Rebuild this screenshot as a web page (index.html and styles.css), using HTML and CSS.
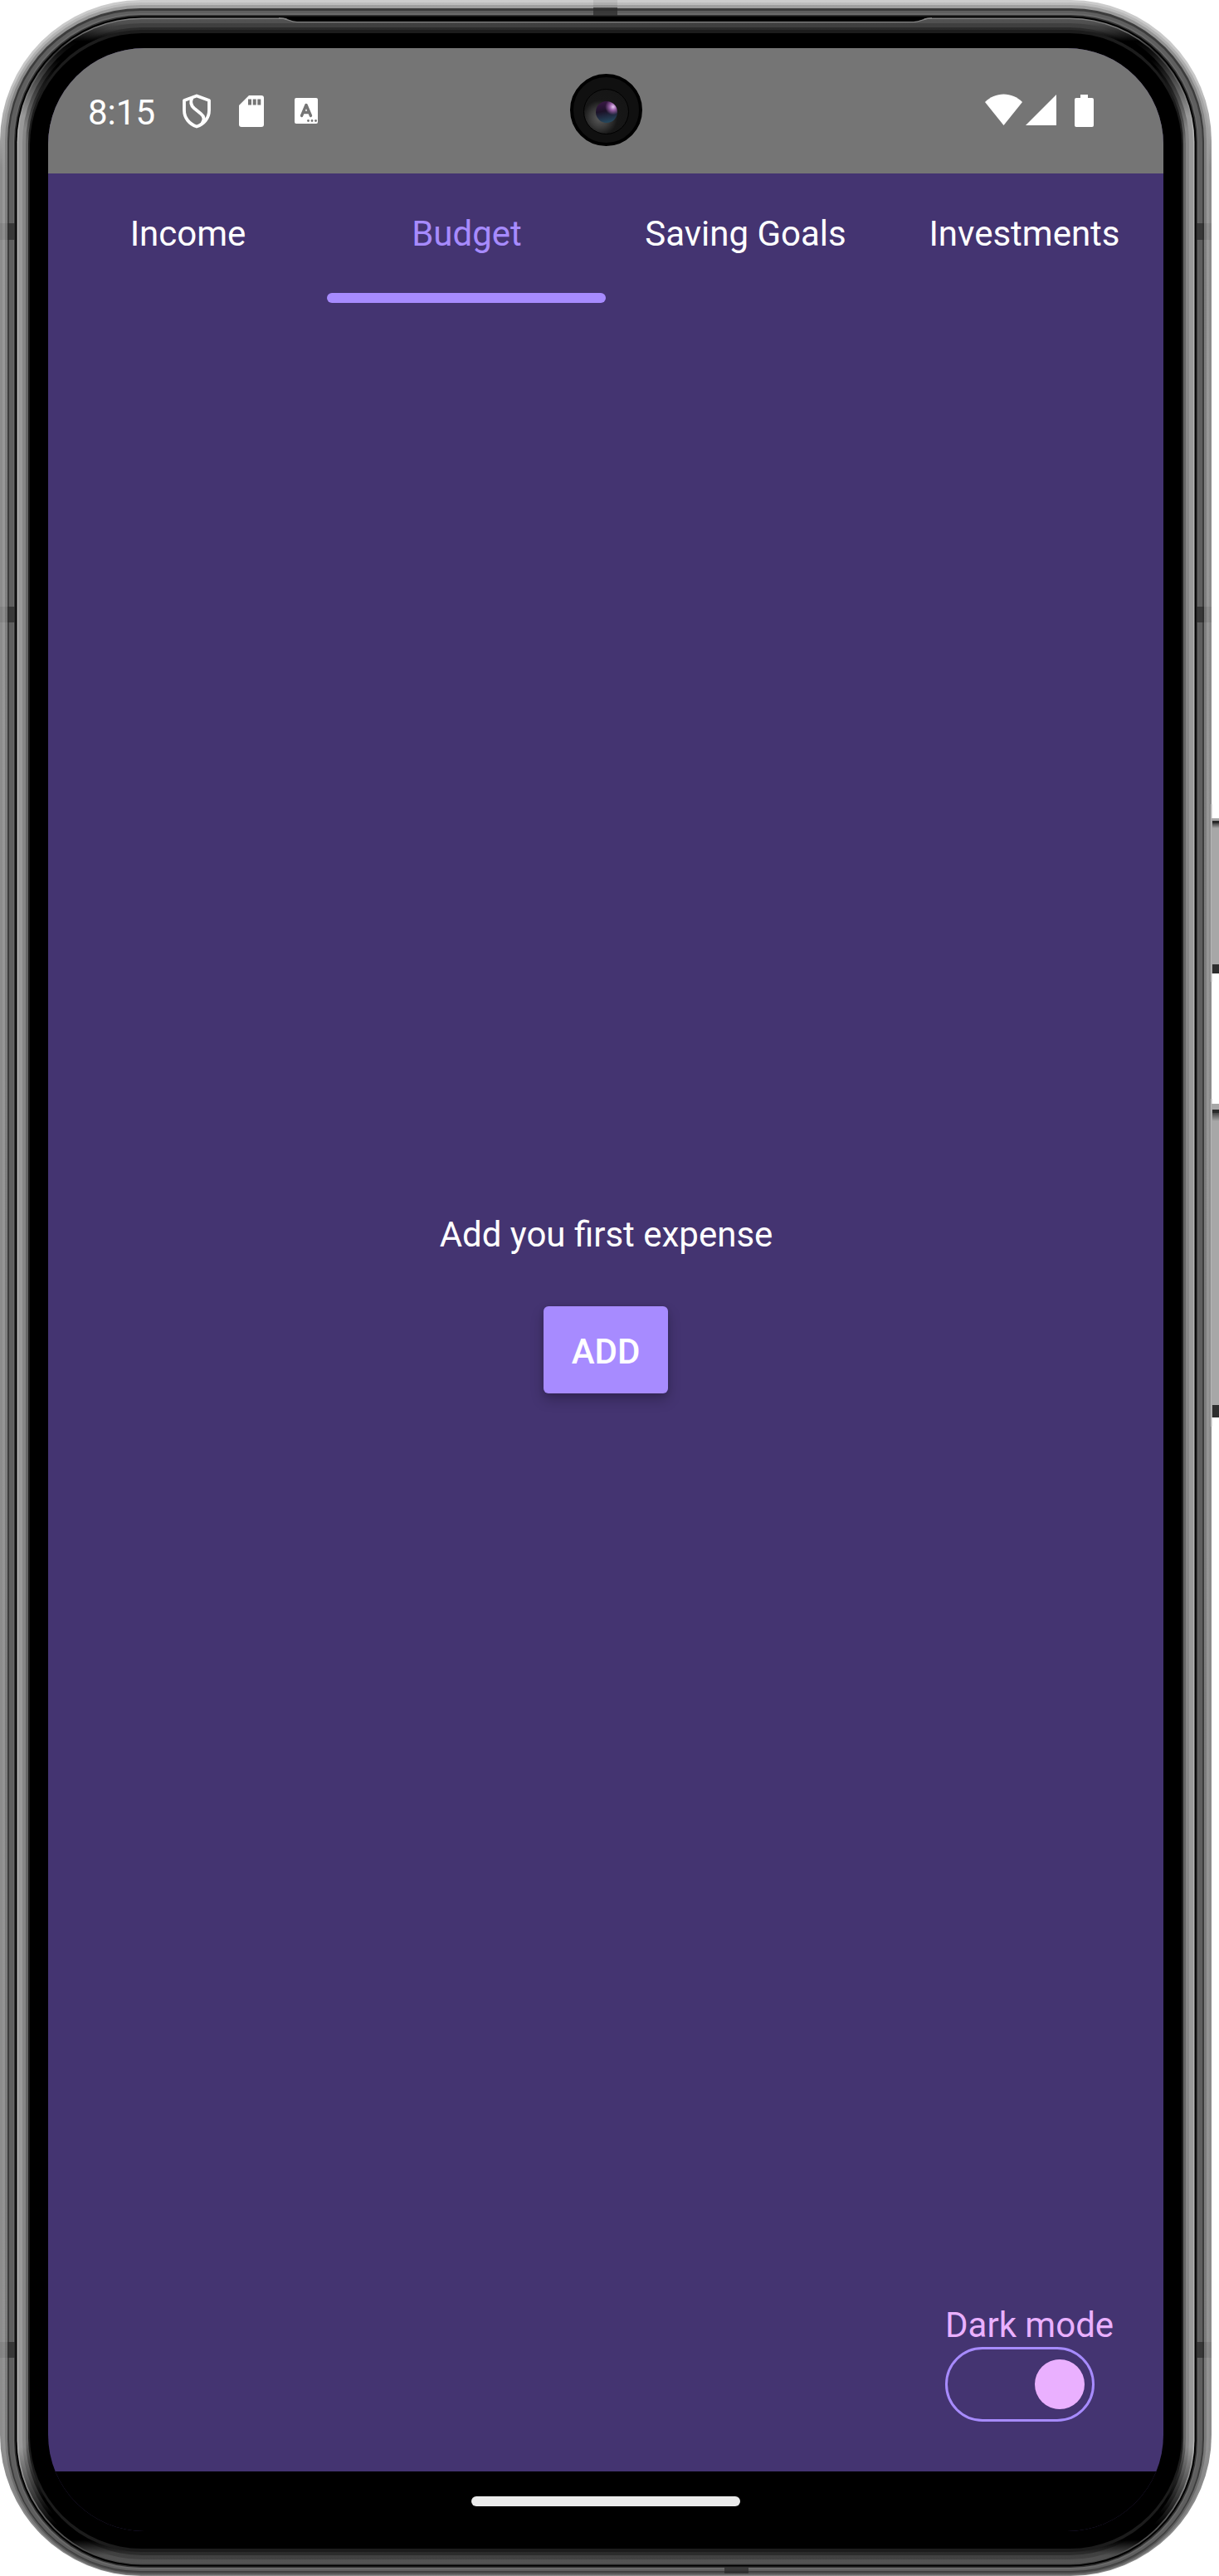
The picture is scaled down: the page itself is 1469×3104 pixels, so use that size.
FILE: index.html
```html
<!DOCTYPE html>
<html lang="en">
<head>
<meta charset="utf-8">
<title>Budget</title>
<link rel="stylesheet" href="styles.css">
</head>
<body>
<div class="phone">
  <svg class="bezel" width="1469" height="3104" viewBox="0 0 1469 3104" aria-hidden="true">
    <defs>
      <linearGradient id="rim0" gradientUnits="userSpaceOnUse" x1="0" y1="0" x2="0" y2="3104"><stop offset="0" stop-color="#ccc"/><stop offset=".03" stop-color="#c8c8c8"/><stop offset=".065" stop-color="#8c8c8c"/><stop offset=".95" stop-color="#8c8c8c"/><stop offset="1" stop-color="#8a8a8a"/></linearGradient>
      <linearGradient id="rim1" gradientUnits="userSpaceOnUse" x1="0" y1="0" x2="0" y2="3104"><stop offset="0" stop-color="#bdbdbd"/><stop offset=".03" stop-color="#aaa"/><stop offset=".065" stop-color="#989898"/><stop offset=".95" stop-color="#929292"/><stop offset="1" stop-color="#666"/></linearGradient>
      <linearGradient id="rim2" gradientUnits="userSpaceOnUse" x1="0" y1="0" x2="0" y2="3104"><stop offset="0" stop-color="#a0a0a0"/><stop offset=".03" stop-color="#888"/><stop offset=".065" stop-color="#808080"/><stop offset=".95" stop-color="#7c7c7c"/><stop offset="1" stop-color="#484848"/></linearGradient>
      <linearGradient id="line" gradientUnits="userSpaceOnUse" x1="0" y1="0" x2="0" y2="3104"><stop offset="0" stop-color="#8a8a8a"/><stop offset=".012" stop-color="#777"/><stop offset=".02" stop-color="#333"/><stop offset=".05" stop-color="#b4b4b4"/><stop offset=".95" stop-color="#b4b4b4"/><stop offset=".98" stop-color="#555"/><stop offset="1" stop-color="#444"/></linearGradient>
      <linearGradient id="glassA" gradientUnits="userSpaceOnUse" x1="0" y1="0" x2="0" y2="3104"><stop offset="0" stop-color="#585858"/><stop offset=".009" stop-color="#505050"/><stop offset=".016" stop-color="#000"/><stop offset=".021" stop-color="#111"/><stop offset=".045" stop-color="#999"/><stop offset=".95" stop-color="#999"/><stop offset=".98" stop-color="#000"/><stop offset=".986" stop-color="#000"/><stop offset=".992" stop-color="#505050"/><stop offset="1" stop-color="#585858"/></linearGradient>
      <linearGradient id="glassB" gradientUnits="userSpaceOnUse" x1="0" y1="0" x2="0" y2="3104"><stop offset="0" stop-color="#484848"/><stop offset=".011" stop-color="#3e3e3e"/><stop offset=".016" stop-color="#000"/><stop offset=".023" stop-color="#000"/><stop offset=".05" stop-color="#868686"/><stop offset=".95" stop-color="#868686"/><stop offset=".976" stop-color="#000"/><stop offset=".986" stop-color="#000"/><stop offset=".991" stop-color="#404040"/><stop offset="1" stop-color="#484848"/></linearGradient>
      <linearGradient id="glassC" gradientUnits="userSpaceOnUse" x1="0" y1="0" x2="0" y2="3104"><stop offset="0" stop-color="#333"/><stop offset=".012" stop-color="#2a2a2a"/><stop offset=".016" stop-color="#000"/><stop offset=".026" stop-color="#000"/><stop offset=".055" stop-color="#666"/><stop offset=".948" stop-color="#666"/><stop offset=".97" stop-color="#000"/><stop offset=".986" stop-color="#000"/><stop offset=".991" stop-color="#2c2c2c"/><stop offset="1" stop-color="#2c2c2c"/></linearGradient>
      <linearGradient id="key" x1="0" y1="0" x2="0" y2="1"><stop offset="0" stop-color="#444"/><stop offset="1" stop-color="#a7a7a7"/></linearGradient>
    </defs>
    <rect x="0" y="0" width="1460" height="3104" rx="170" fill="url(#rim0)"/>
    <rect x="3" y="3" width="1454" height="3100" rx="167" fill="url(#rim1)"/>
    <rect x="6" y="6" width="1448" height="3095" rx="164" fill="url(#rim2)"/>
    <rect x="9" y="10" width="1442" height="3089" rx="160" fill="#3c3c3c"/>
    <rect x="11" y="13" width="1438" height="3085" rx="158" fill="#5f5f5f"/>
    <rect x="16" y="16" width="1428" height="3080" rx="154" fill="#6a6a6a"/>
    <rect x="17" y="18" width="1426" height="3076" rx="153" fill="#333"/>
    <rect x="18.5" y="19.5" width="1423" height="3073" rx="152" fill="#000"/>
    <rect x="20.5" y="21.5" width="1419" height="3069" rx="150" fill="url(#line)"/>
    <rect x="22" y="23" width="1416" height="3066" rx="149" fill="url(#glassA)"/>
    <rect x="27" y="28" width="1406" height="3056" rx="144" fill="url(#glassB)"/>
    <rect x="31" y="33" width="1398" height="3046" rx="140" fill="url(#glassC)"/>
    <rect x="34" y="36" width="1392" height="3039" rx="137" fill="#1c1c1c"/>
    <rect x="36" y="40" width="1388" height="3031" rx="135" fill="#000"/>
    <path d="M336 20H1123C1114 21 1109 26 1101 26H358C350 26 346 21 336 20Z" fill="#000"/>
    <path d="M336 21.700C346 22 349 26.500 358 26.500H1101C1109 26.500 1114 22 1123 21.700" fill="none" stroke="#858585" stroke-width="1.200"/>
    <g fill="#282828" opacity=".7">
      <path d="M9 269h9v20H9zM9 731h9v19H9zM9 2822h9v19H9zM1442 269h9v20h-9zM1442 731h9v19h-9zM1442 2822h9v19h-9zM715 9h29v10h-29zM873 3094h29v7h-29z"/>
    </g>
    <g fill="#000" opacity=".07">
      <path d="M0 269h9v20H0zM0 731h9v19H0zM0 2822h9v19H0zM1451 269h9v20h-9zM1451 731h9v19h-9zM1451 2822h9v19h-9zM715 0h29v9h-29z"/>
    </g>
    <g>
      <path d="M1459 969h1.500v214h-1.500zM1459 1324h1.500v395h-1.500z" fill="#b5b5b5"/>
      <path d="M1460 986h9v187h-9z" fill="#a7a7a7"/>
      <path d="M1461 989h8v3h-8z" fill="#2a2a2a"/><path d="M1461 992h8v6h-8z" fill="url(#key)"/>
      <path d="M1461 1162h8v11h-8z" fill="#2e2e2e"/>
      <path d="M1460 1330h9v378h-9z" fill="#a7a7a7"/>
      <path d="M1461 1337h8v4h-8z" fill="#2a2a2a"/><path d="M1461 1341h8v10h-8z" fill="url(#key)"/>
      <path d="M1461 1693h8v15h-8z" fill="#2e2e2e"/>
    </g>
  </svg>

  <div class="screen">
    <header class="status">
      <span class="clock">8:15</span>
      <svg class="shield" viewBox="0 0 34 42" fill="none" stroke="#fff" stroke-width="3.800" stroke-linejoin="round"><path d="M17 2.500L32 8V20C32 29 26 36.500 17 39.500C8 36.500 2 29 2 20V8Z"/><path d="M11.500 5C9 10 10 14 14 17.500L22 24C27 28 26 32 23.500 35.500"/></svg>
      <svg class="card" viewBox="0 0 30 38" fill="#fff"><path d="M12 0H27Q30 0 30 3V35Q30 38 27 38H3Q0 38 0 35V12Z"/><path d="M11 4.500h4v7h-4zM16.700 4.500h4v7h-4zM22.300 4.500h4v7h-4z" fill="#757575"/></svg>
      <svg class="lang" viewBox="0 0 28 31"><rect width="28" height="31" rx="2" fill="#fff"/><path d="M8.500 21.500L14 8.500L19.500 21.500M10.500 17.500H17.500" fill="none" stroke="#757575" stroke-width="3.400" stroke-linecap="round" stroke-linejoin="round"/><g fill="#757575"><circle cx="16.500" cy="27.500" r="1.400"/><circle cx="21" cy="27.500" r="1.400"/><circle cx="25.500" cy="27.500" r="1.400"/></g></svg>
      <span class="spacer"></span>
      <svg class="wifi" viewBox="0 0 45 38" fill="#fff"><path d="M22.500 38L0 10C6 4 14 .500 22.500 .500S39 4 45 10Z"/></svg>
      <svg class="signal" viewBox="0 0 37 37" fill="#fff"><path d="M37 0V37H0Z"/></svg>
      <svg class="battery" viewBox="0 0 23 39" fill="#fff"><path d="M7 0h9v4h5q2 0 2 2v31q0 2-2 2H2q-2 0-2-2V6q0-2 2-2h5z"/></svg>
      <div class="camera"><div class="ring"><div class="lens"></div></div></div>
    </header>
    <nav class="tabs">
      <a class="tab">Income</a>
      <a class="tab active">Budget</a>
      <a class="tab">Saving Goals</a>
      <a class="tab">Investments</a>
    </nav>
    <main class="content">
      <p class="empty">Add you first expense</p>
      <button class="add">ADD</button>
    </main>
    <footer class="mode">
      <div class="mode-box">
        <span class="mode-label">Dark mode</span>
        <span class="switch"><span class="thumb"></span></span>
      </div>
    </footer>
    <div class="navbar"><span class="handle"></span></div>
  </div>
</div>
</body>
</html>
```
FILE: styles.css
```css
* { box-sizing: border-box; }
body { margin: 0; background: #fff; font-family: Roboto, sans-serif; font-size: 42px; color: #fff; }
.phone { position: relative; width: 1469px; height: 3104px; padding: 58px 67px 54px 58px; overflow: hidden; }
.bezel { position: absolute; left: 0; top: 0; display: block; }
.screen { position: relative; width: 1344px; height: 2992px; border-radius: 116px; overflow: hidden; background: #443471; display: flex; flex-direction: column; }
.status { position: relative; height: 151px; background: #757575; display: flex; align-items: flex-start; padding: 55px 84px 0 48px; flex: none; }
.status svg { display: block; flex: none; }
.clock { width: 81px; line-height: 50px; margin-top: -2px; white-space: nowrap; }
.shield { width: 34px; height: 42px; margin: 0 0 0 33px; }
.card { width: 30px; height: 38px; margin: 2px 0 0 34px; }
.lang { width: 28px; height: 31px; margin: 5px 0 0 37px; }
.spacer { flex: 1; }
.wifi { width: 45px; height: 38px; }
.signal { width: 37px; height: 37px; margin: 1px 0 0 4px; }
.battery { width: 23px; height: 39px; margin: 1px 0 0 22px; }
.camera { position: absolute; left: 629px; top: 31px; width: 87px; height: 87px; border-radius: 50%; background: #101010; border: 4px solid #000; display: flex; align-items: center; justify-content: center; }
.ring { width: 55px; height: 55px; margin-top: 4px; border-radius: 50%; border: 1.5px solid #000; background: radial-gradient(circle at 36% 64%, #5c5c5c 0, #3a3a3a 24%, #171717 44%, #141414 100%); display: flex; align-items: center; justify-content: center; }
.lens { width: 26px; height: 26px; border-radius: 50%; background: radial-gradient(circle at 80% 26%, #e8c8f4 0, #9a62a8 14%, transparent 34%), linear-gradient(170deg, #3d1848 0%, #1c1228 45%, #24465c 90%); }
.tabs { display: flex; height: 156px; flex: none; }
.tab { flex: 1; height: 156px; text-align: center; line-height: 50px; padding: 48px 0 0 1px; white-space: nowrap; position: relative; }
.active { color: #a78bff; }
.active::after { content: ""; position: absolute; left: 0; bottom: 0; width: 100%; height: 12px; border-radius: 6px; background: #a78bff; }
.content { flex: 1; display: flex; flex-direction: column; align-items: center; padding-top: 1098px; }
.empty { margin: 0 0 61px; padding-left: 1px; line-height: 50px; }
.add { width: 150px; height: 105px; border: 0; border-radius: 6px; padding: 4px 0 0; background: #a78bff; color: #fff; font: 500 42px/50px Roboto, sans-serif; box-shadow: 0 8px 16px rgba(0,0,0,.22), 0 1px 6px rgba(0,0,0,.12); }
.mode { display: flex; justify-content: flex-end; padding: 0 60px 60px 0; flex: none; }
.mode-box { display: flex; flex-direction: column; width: 203px; }
.mode-label { color: #eab0ff; line-height: 50px; padding-bottom: 1px; white-space: nowrap; }
.switch { width: 180px; height: 90px; border: 3px solid #a78bff; border-radius: 45px; display: flex; align-items: center; justify-content: flex-end; padding-right: 9px; }
.thumb { width: 60px; height: 60px; border-radius: 50%; background: #eab0ff; }
.navbar { height: 72px; background: #000; flex: none; display: flex; justify-content: center; align-items: flex-start; padding-top: 30px; }
.handle { width: 324px; height: 12px; border-radius: 6px; background: #ebebeb; }
```
